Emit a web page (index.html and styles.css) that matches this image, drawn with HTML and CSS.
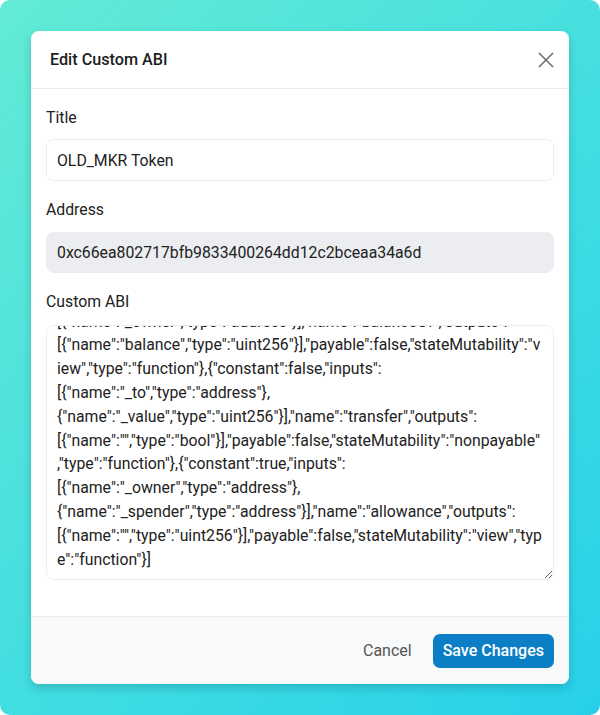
FILE: index.html
```html
<!DOCTYPE html>
<html lang="en">
<head>
 <meta charset="UTF-8">
 <meta name="viewport" content="width=device-width, initial-scale=1.0">
 <title>Edit Custom ABI</title>
 <link rel="stylesheet" href="styles.css">
</head>
<body>

 <div class="backdrop">
 <div class="modal">

 <!-- Header -->
 <div class="modal-header">
 <h3>Edit Custom ABI</h3>
 <button class="close-btn" aria-label="Close">
 <svg width="16" height="16" viewBox="0 0 16 16">
 <path d="M1 1L15 15M15 1L1 15" stroke="#6b6b6b" stroke-width="1.5" fill="none"/>
 </svg>
 </button>
 </div>

 <!-- Form -->
 <div class="modal-body">
 <label class="field-label" for="title">Title</label>
 <input id="title" class="field" type="text" value="OLD_MKR Token">

 <label class="field-label" for="address">Address</label>
 <input id="address" class="field readonly" type="text" value="0xc66ea802717bfb9833400264dd12c2bceaa34a6d" readonly>

 <label class="field-label" for="abi">Custom ABI</label>
 <textarea id="abi" class="field abi-box">[{"constant":true,"inputs":[],"name":"name","outputs":[{"name":"","type":"bytes32"}],"payable":false,"stateMutability":"view","type":"function"},{"constant":false,"inputs":[{"name":"_spender","type":"address"},{"name":"_value","type":"uint256"}],"name":"approve","outputs":[{"name":"","type":"bool"}],"payable":false,"stateMutability":"nonpayable","type":"function"},{"constant":true,"inputs":[],"name":"totalSupply","outputs":[{"name":"","type":"uint256"}],"payable":false,"stateMutability":"view","type":"function"},{"constant":false,"inputs":[{"name":"_from","type":"address"},{"name":"_to","type":"address"},{"name":"_value","type":"uint256"}],"name":"transferFrom","outputs":[{"name":"","type":"bool"}],"payable":false,"stateMutability":"nonpayable","type":"function"},{"constant":true,"inputs":[],"name":"decimals","outputs":[{"name":"","type":"uint8"}],"payable":false,"stateMutability":"view","type":"function"},{"constant":true,"inputs":[{"name":"_owner","type":"address"}],"name":"balanceOf","outputs":[{"name":"balance","type":"uint256"}],"payable":false,"stateMutability":"view","type":"function"},{"constant":false,"inputs":[{"name":"_to","type":"address"},{"name":"_value","type":"uint256"}],"name":"transfer","outputs":[{"name":"","type":"bool"}],"payable":false,"stateMutability":"nonpayable","type":"function"},{"constant":true,"inputs":[{"name":"_owner","type":"address"},{"name":"_spender","type":"address"}],"name":"allowance","outputs":[{"name":"","type":"uint256"}],"payable":false,"stateMutability":"view","type":"function"}]</textarea>
 </div>

 <!-- Footer -->
 <div class="modal-footer">
 <button class="cancel-btn">Cancel</button>
 <button class="save-btn">Save Changes</button>
 </div>

 </div>
 </div>

 <script>
 // tampilkan bagian akhir ABI
 let abi = document.getElementById("abi");
 abi.scrollTop = abi.scrollHeight;
 </script>

</body>
</html>
```

FILE: styles.css
```css
/* Gaya umum */
body {
margin: 0;
background: #fff;
font-family: Roboto, "Liberation Sans", Arial, sans-serif;
color: #222;
}

/* Latar gradasi */
.backdrop {
width: 600px;
height: 715px;
box-sizing: border-box;
padding: 31px;
border-radius: 10px;
background: linear-gradient(135deg, #63ebd5 0%, #45dfe0 50%, #27d0ea 100%);
}

/* Kotak modal */
.modal {
background: #fff;
border-radius: 8px;
overflow: hidden;
box-shadow: 0 4px 10px rgba(0, 60, 70, 0.22);
}

/* Header */
.modal-header {
display: flex;
align-items: center;
justify-content: space-between;
height: 57px;
padding: 0 11px 0 19px;
border-bottom: 1px solid #ececec;
}

.modal-header h3 {
margin: 0;
font-size: 16.2px;
font-weight: 500;
color: #1d1d1d;
}

.close-btn {
display: flex;
padding: 4px;
border: none;
background: none;
cursor: pointer;
}

/* Isi form */
.modal-body {
display: flex;
flex-direction: column;
padding: 17px 15px 36px;
}

.field-label {
font-size: 15.8px;
line-height: 24px;
margin-bottom: 9px;
}

.field {
box-sizing: border-box;
width: 100%;
height: 42px;
margin: 0 0 17px;
padding: 0 10px;
border: 1px solid #ebedf0;
border-radius: 8px;
font: inherit;
font-size: 15.8px;
color: #222;
background: #fff;
outline: none;
}

.field.readonly {
height: 41px;
margin-top: 1px;
background: #ebedf0;
border-color: #ebedf0;
}

/* Kotak ABI */
.abi-box {
height: 255px;
margin: 2px 0 0;
padding: 8px 10px;
line-height: 23.8px;
scrollbar-width: none;
}

.abi-box::-webkit-scrollbar {
display: none;
}

/* Footer */
.modal-footer {
display: flex;
align-items: center;
justify-content: flex-end;
gap: 10px;
height: 67px;
padding: 0 15px;
background: #f8f9fa;
border-top: 1px solid #ececec;
}

.cancel-btn {
padding: 8px 11px;
border: none;
background: none;
font: inherit;
font-size: 16px;
color: #555;
cursor: pointer;
}

.save-btn {
height: 34px;
padding: 0 10px;
border: none;
border-radius: 7px;
background: #0c7ec5;
font: inherit;
font-size: 16px;
font-weight: 500;
color: #fff;
cursor: pointer;
}
```
